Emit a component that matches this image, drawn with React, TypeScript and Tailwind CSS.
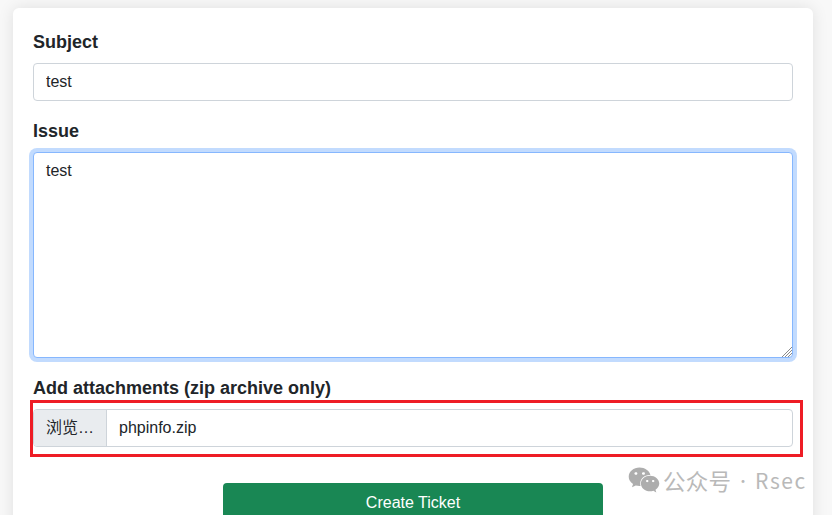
import { FaWeixin } from 'react-icons/fa'

const FONT = "font-['Liberation_Sans','Noto_Sans_CJK_SC',sans-serif]"

function Label({ text }: { text: string }) {
  return <label className="block mb-[7px] pt-px text-[18px] leading-[27px] font-bold text-[#212529]">{text}</label>
}

export default function App() {
  return (
    <div className={`relative h-[515px] w-[832px] overflow-hidden bg-[#f8f8f8] pl-[13px] pt-2 ${FONT}`}>
      <div className="h-[600px] w-[800px] rounded-md bg-white px-5 pt-5 shadow-[0_0_16px_rgba(0,0,0,0.1)]">
        <div className="mb-4">
          <Label text="Subject" />
          <input
            readOnly
            value="test"
            className="block h-[38px] w-full rounded-[4px] border border-[#ced4da] bg-white px-3 text-base text-[#212529] outline-none"
          />
        </div>

        <div className="relative mb-4">
          <Label text="Issue" />
          <textarea
            readOnly
            value="test"
            className="block h-[206px] w-full resize-none rounded-[4px] border border-[#86b7fe] bg-white px-3 py-1.5 text-base leading-6 text-[#212529] shadow-[0_0_0_4px_rgba(13,110,253,0.25)] outline-none"
          />
          {/* resize grip */}
          <svg className="absolute bottom-px right-px h-[11px] w-[11px] text-[#8a8a8a]" viewBox="0 0 11 11" fill="none" stroke="currentColor" strokeWidth="1">
            <path d="M11 1 1 11M11 4 4 11M11 7 7 11" />
          </svg>
        </div>

        <div className="relative">
          <Label text="Add attachments (zip archive only)" />
          <div className="flex h-[38px] w-full overflow-hidden rounded-[4px] border border-[#ced4da] text-base text-[#212529]">
            <span className="flex w-[73px] items-center justify-center border-r border-[#ced4da] bg-[#e9ecef]">浏览…</span>
            <span className="flex items-center pl-3">phpinfo.zip</span>
          </div>
          {/* red annotation box */}
          <div className="absolute left-[-3px] right-[-10px] top-[26px] h-[57px] border-[3px] border-[#ee1c25]" />
        </div>

        <div className="mt-9 flex justify-center">
          <button className="h-[38px] w-[380px] rounded-[4px] bg-[#198754] pt-px text-base text-white">Create Ticket</button>
        </div>
      </div>

      {/* watermark */}
      <div className="absolute left-[628px] top-[464px] flex items-center text-[#b9b9b9] font-['Noto_Sans_CJK_SC',sans-serif] leading-8 whitespace-nowrap">
        <FaWeixin className="mr-[3px] h-[32px] w-[32px] text-[#adadad]" />
        <span className="text-[22.5px] tracking-[0.2px]">公众号</span>
        <span className="w-[24px] text-center text-[14px]">·</span>
        <span className="text-[21px] tracking-[1.5px]">Rsec</span>
      </div>
    </div>
  )
}
